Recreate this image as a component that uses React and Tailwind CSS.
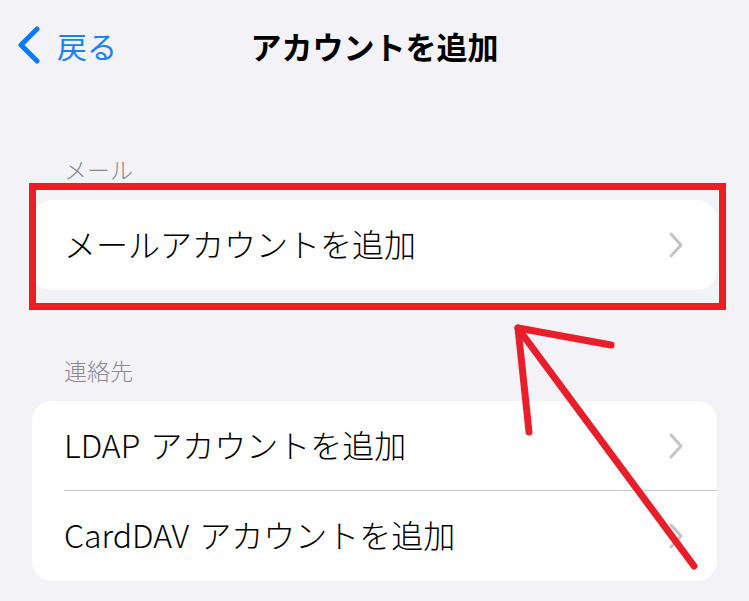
import React from 'react';

const font = { fontFamily: '"Noto Sans CJK JP", "Noto Sans", sans-serif' };

const Chevron = () => (
  <svg width="16" height="26" viewBox="0 0 16 26" fill="none" className="shrink-0">
    <path d="M3 2 L13 13 L3 24" stroke="#c4c4c7" strokeWidth="3" strokeLinecap="round" strokeLinejoin="round" />
  </svg>
);

const Row = ({ prefix, label, divider }) => (
  <div className="relative flex h-[90px] items-center justify-between pl-8 pr-[33px]">
    <span className="pb-[5px] text-[32px] font-light leading-none text-black">
      {prefix && <span className="mr-[10px]">{prefix}</span>}
      {label}
    </span>
    <Chevron />
    {divider && <div className="absolute bottom-0 left-8 right-0 h-px bg-[#c6c6c8]" />}
  </div>
);

const Section = ({ title, rows, gap }) => (
  <div>
    <div className={`flex items-end px-16 text-[23px] font-light leading-none text-[#8a8a8e] ${gap}`}>
      <span className="pb-[19px]">{title}</span>
    </div>
    <div className="mx-8 overflow-hidden rounded-[20px] bg-white">
      {rows.map((r, i) => (
        <Row key={i} prefix={r.prefix} label={r.label} divider={i < rows.length - 1} />
      ))}
    </div>
  </div>
);

export default function App() {
  return (
    <div className="relative h-[601px] w-[749px] overflow-hidden bg-[#f2f2f7]" style={font}>
      {/* nav bar */}
      <div className="grid h-[90px] grid-cols-[1fr_auto_1fr] items-center">
        <div className="flex items-center gap-[16px] pl-[17px]">
          <svg width="24" height="38" viewBox="0 0 24 38" fill="none">
            <path d="M20 3 L4 19 L20 35" stroke="#0a7aff" strokeWidth="5" strokeLinecap="round" strokeLinejoin="round" />
          </svg>
          <span className="text-[30px] leading-none text-[#1a80f5]">戻る</span>
        </div>
        <div className="text-[31px] font-bold leading-none text-black">アカウントを追加</div>
        <div />
      </div>

      <Section title="メール" rows={[{ label: 'メールアカウントを追加' }]} gap="h-[110px]" />
      <Section
        title="連絡先"
        rows={[
          { prefix: 'LDAP', label: 'アカウントを追加' },
          { prefix: 'CardDAV', label: 'アカウントを追加' },
        ]}
        gap="h-[111px]"
      />

      {/* annotation: red box + arrow */}
      <div className="pointer-events-none absolute left-[29px] top-[183px] h-[127px] w-[697px] border-[7px] border-[#e81e2a]" />
      <svg className="pointer-events-none absolute left-0 top-0" width="749" height="601" viewBox="0 0 749 601">
        <g stroke="#e81e2a" strokeWidth="7" strokeLinecap="round" fill="none">
          <line x1="518" y1="328" x2="529" y2="432" />
          <line x1="518" y1="328" x2="611" y2="345" />
          <line x1="520" y1="331" x2="694" y2="566" />
        </g>
      </svg>
    </div>
  );
}
